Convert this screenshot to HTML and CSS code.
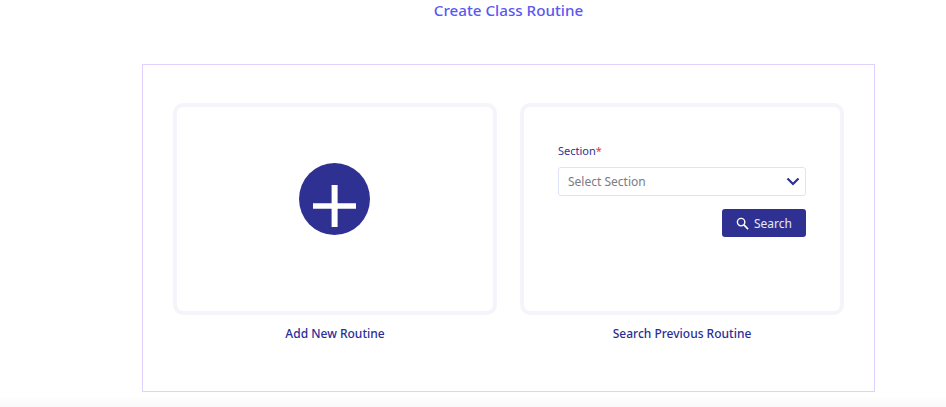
FILE: index.html
```html
<!DOCTYPE html>
<html lang="en">
<head>
<meta charset="utf-8">
<title>Create Class Routine</title>
<link rel="stylesheet" href="styles.css">
</head>
<body>
<main class="page">
  <h1 class="title">Create Class Routine</h1>
  <section class="panel">
    <div class="option">
      <div class="card card-add">
        <button class="add-btn" type="button" aria-label="Add New Routine">
          <svg width="43" height="42" viewBox="0 0 43 42" aria-hidden="true"><path d="M18.600 0h6v18.200H43v5.600H24.600V42h-6V23.800H0v-5.600h18.600z" fill="#fff"/></svg>
        </button>
      </div>
      <p class="caption">Add New Routine</p>
    </div>
    <div class="option">
      <div class="card card-search">
        <label class="label">Section<span class="req">*</span></label>
        <div class="select">
          <span>Select Section</span>
          <svg width="14" height="9" viewBox="0 0 14 9" aria-hidden="true"><path d="M1.500 1.500L7 7l5.500-5.500" fill="none" stroke="#2e3192" stroke-width="2.200"/></svg>
        </div>
        <button class="search-btn" type="button">
          <svg width="13" height="13" viewBox="0 0 14 14" aria-hidden="true"><circle cx="5.500" cy="5.500" r="4" fill="none" stroke="#fff" stroke-width="1.500"/><path d="M8.500 8.500L13 13" stroke="#fff" stroke-width="1.700"/></svg>
          Search
        </button>
      </div>
      <p class="caption">Search Previous Routine</p>
    </div>
  </section>
</main>
<div class="footer-fade"></div>
</body>
</html>
```
FILE: styles.css
```css
* { box-sizing: border-box; }
html, body { margin: 0; height: 100%; background: #fff; overflow: hidden; }
body { font-family: "Noto Sans", "Open Sans", sans-serif; }
.page { padding-left: 142px; width: 875px; }
.title { margin: 0; height: 64px; font-size: 15.2px; line-height: 20px; font-weight: 500; color: #5a57f2; text-align: center; }
.panel { height: 328px; border: 1px solid #e0d2ff; padding: 38px 30px 0; display: flex; gap: 23px; }
.option { width: 324px; }
.card { height: 212px; border: 4px solid #f4f5fb; border-radius: 10px; background: #fff; }
.card-add { display: flex; align-items: center; justify-content: center; padding: 0 1px 20px 0; }
.add-btn { width: 71px; height: 72px; border: 0; padding: 14px 0 0; border-radius: 50%; background: #2e3192; display: flex; align-items: center; justify-content: center; }
.card-search { padding: 36px 34px 0; display: flex; flex-direction: column; }
.label { font-size: 11px; line-height: 16px; color: #2e3192; }
.req { color: #e8324a; }
.select { margin-top: 8px; height: 29px; border: 1px solid #dfe3fa; border-radius: 3px; padding: 0 5px 0 9px; display: flex; align-items: center; justify-content: space-between; font-size: 12px; color: #7a7c85; }
.search-btn { margin-top: 13px; align-self: flex-end; width: 84px; height: 28px; border: 0; border-radius: 3px; background: #2e3192; color: #e8e8f6; font: inherit; font-size: 12px; display: flex; align-items: center; justify-content: center; gap: 5px; }
.caption { margin: 10px 0 0; font-size: 12px; line-height: 18px; font-weight: 500; color: #2a2e96; text-align: center; }
.footer-fade { position: fixed; left: 0; right: 0; bottom: 0; height: 11px; background: linear-gradient(#fff, #f9f9f9); }
```
